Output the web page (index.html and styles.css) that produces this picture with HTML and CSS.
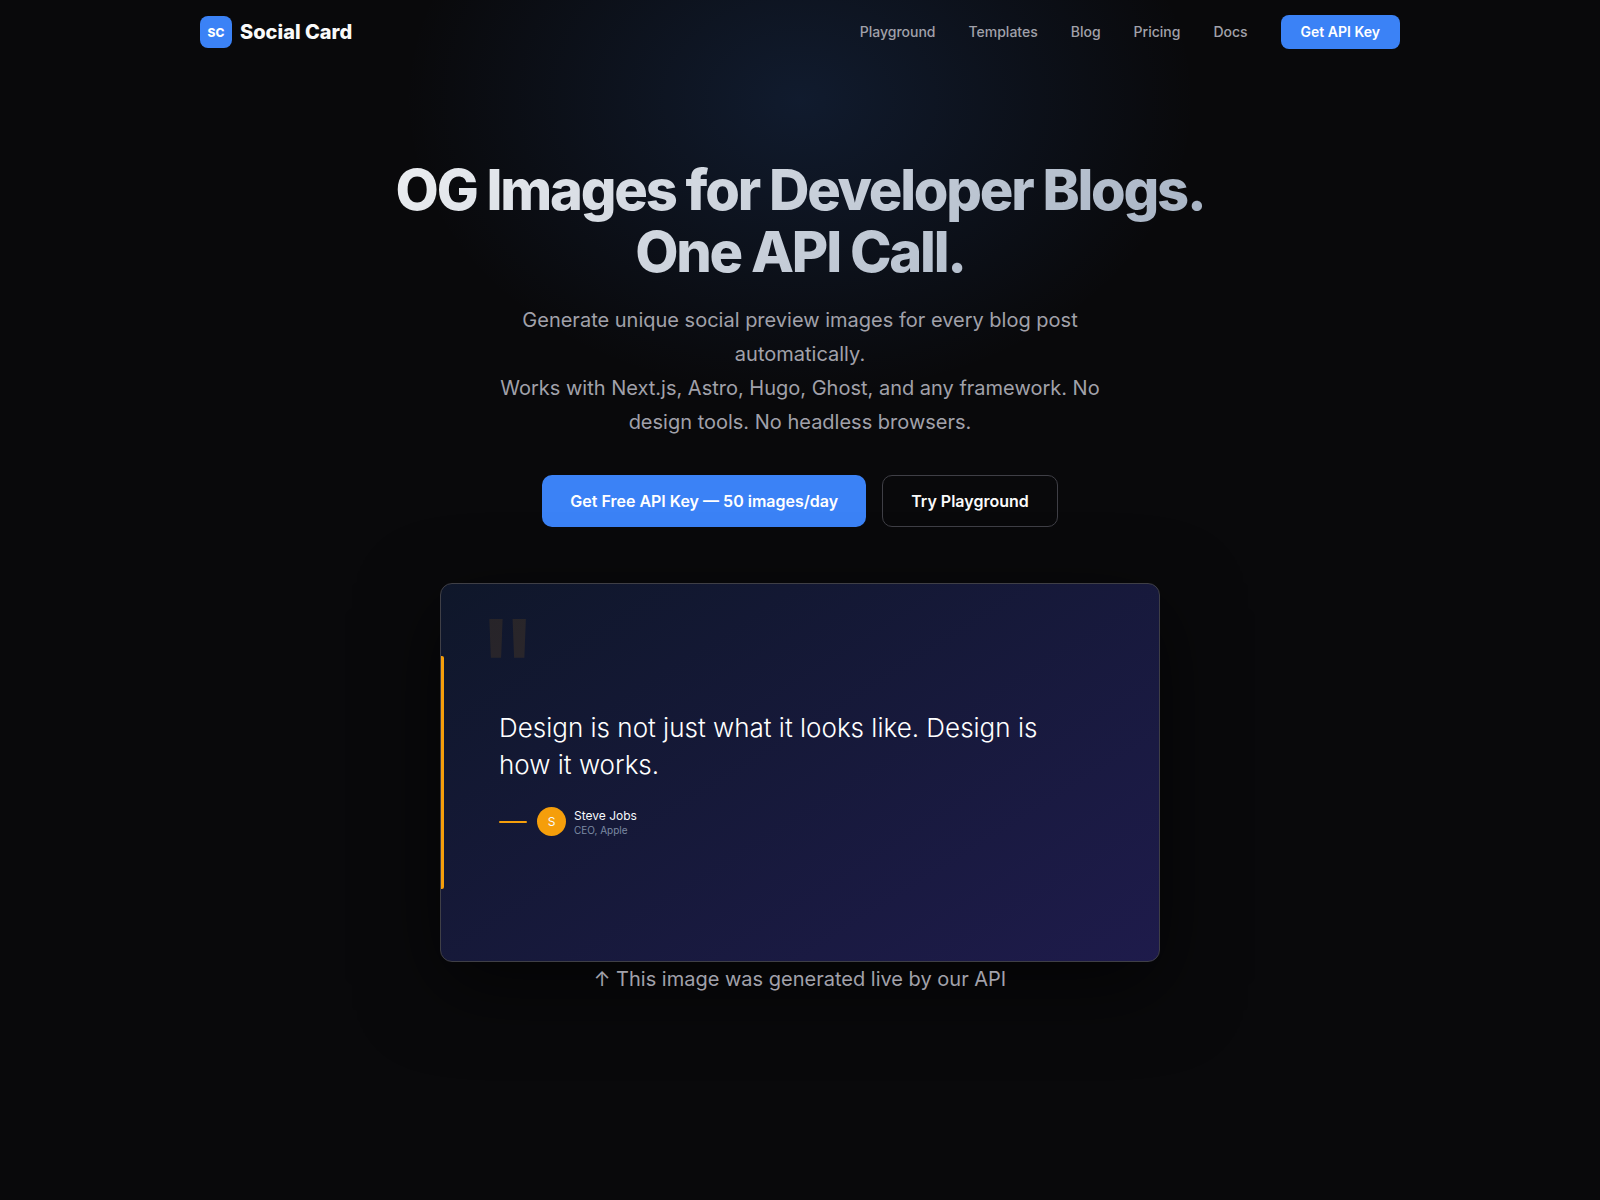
FILE: index.html
```
<!DOCTYPE html>
<html lang="en">
<head>
  <meta charset="UTF-8" />
  <meta name="viewport" content="width=device-width, initial-scale=1.0" />
  <title>Social Card - OG Images for Developer Blogs</title>
  <link rel="stylesheet" href="styles.css">
</head>
<body>
  <header class="header">
    <nav class="nav">
      <a href="/" class="logo">
        <span class="logo-icon">SC</span>
        Social Card
      </a>
      <div class="nav-links">
        <a href="/playground">Playground</a>
        <a href="/templates">Templates</a>
        <a href="/blog">Blog</a>
        <a href="/pricing">Pricing</a>
        <a href="/docs">Docs</a>
        <a href="/signup" class="nav-cta">Get API Key</a>
      </div>
    </nav>
  </header>

  <main class="hero">
    <h1>OG Images for Developer Blogs.<br>One API Call.</h1>
    <p class="hero-text">Generate unique social preview images for every blog post automatically.<br>Works with Next.js, Astro, Hugo, Ghost, and any framework. No design tools. No headless browsers.</p>
    <div class="hero-buttons">
      <a href="/signup" class="btn btn-primary">Get Free API Key — 50 images/day</a>
      <a href="/playground" class="btn btn-secondary">Try Playground</a>
    </div>

    <div class="preview">
      <span class="quote-mark" aria-hidden="true">"</span>
      <blockquote class="quote-text">Design is not just what it looks like. Design is how it works.</blockquote>
      <div class="author">
        <span class="author-line"></span>
        <span class="avatar">S</span>
        <div class="author-info">
          <div class="author-name">Steve Jobs</div>
          <div class="author-role">CEO, Apple</div>
        </div>
      </div>
    </div>
    <p class="hero-text">↑ This image was generated live by our API</p>
  </main>
</body>
</html>
```
FILE: styles.css
```
* {
  box-sizing: border-box;
  margin: 0;
  padding: 0;
}

body {
  position: relative;
  min-height: 100vh;
  overflow-x: hidden;
  background: #09090b;
  color: #fafafa;
  font-family: Inter, "Liberation Sans", sans-serif;
  -webkit-font-smoothing: antialiased;
}

/* blue glow behind the hero */
body::before {
  content: "";
  position: absolute;
  top: -200px;
  left: 50%;
  z-index: -1;
  width: 800px;
  height: 600px;
  transform: translateX(-50%);
  background: radial-gradient(ellipse, rgba(59, 130, 246, 0.15) 0%, transparent 70%);
}

a {
  color: inherit;
  text-decoration: none;
}

.nav {
  display: flex;
  align-items: center;
  justify-content: space-between;
  max-width: 1248px;
  height: 64px;
  margin: 0 auto;
  padding: 0 24px;
}

.logo {
  display: flex;
  align-items: center;
  gap: 8px;
  font-size: 20px;
  font-weight: 800;
}

.logo-icon {
  display: flex;
  align-items: center;
  justify-content: center;
  width: 32px;
  height: 32px;
  border-radius: 8px;
  background: #3b82f6;
  color: #fff;
  font-size: 12px;
}

.nav-links {
  display: flex;
  align-items: center;
  gap: 33px;
  color: #a1a1aa;
  font-size: 14px;
  font-weight: 500;
  line-height: 18px;
}

.nav-links a:hover {
  color: #fafafa;
}

.nav-links .nav-cta {
  padding: 8px 20px;
  border-radius: 8px;
  background: #3b82f6;
  color: #fff;
  font-weight: 600;
}

.hero {
  padding: 95px 24px;
  text-align: center;
}

.hero h1 {
  max-width: 1200px;
  margin: 0 auto 20px;
  background: linear-gradient(135deg, #fafafa 0%, #94a3b8 100%);
  -webkit-background-clip: text;
  background-clip: text;
  color: transparent;
  font-size: 56px;
  font-weight: 800;
  line-height: 62px;
  letter-spacing: -0.04em;
}

.hero-text {
  position: relative;
  max-width: 600px;
  margin: 0 auto;
  color: #a1a1aa;
  font-size: 20px;
  line-height: 34px;
}

.hero-buttons {
  display: flex;
  justify-content: center;
  gap: 16px;
  margin: 36px 0 56px;
}

.btn {
  padding: 16px 28px;
  border-radius: 10px;
  font-size: 16px;
  font-weight: 600;
  line-height: 20px;
}

.btn-primary {
  background: #3b82f6;
  color: #fff;
}

.btn-secondary {
  padding: 15px 28px;
  border: 1px solid #3f3f46;
}

/* sample card */
.preview {
  position: relative;
  display: flex;
  flex-direction: column;
  justify-content: center;
  max-width: 720px;
  aspect-ratio: 720 / 379;
  margin: 0 auto;
  padding: 0 100px 0 58px;
  overflow: hidden;
  border: 1px solid #3f3f46;
  border-radius: 12px;
  background: linear-gradient(148deg, #0f172a 0%, #1e1b4b 100%);
  box-shadow: 0 24px 80px rgba(0, 0, 0, 0.6);
  text-align: left;
}

.preview::before {
  content: "";
  position: absolute;
  top: 72px;
  bottom: 72px;
  left: 0;
  width: 3px;
  border-radius: 0 2px 2px 0;
  background: #f59e0b;
}

.quote-mark {
  position: absolute;
  top: 46px;
  left: 34px;
  color: #f59e0b;
  font-size: 140px;
  font-weight: 400;
  line-height: 80px;
  opacity: 0.1;
}

.quote-text {
  color: #fff;
  font-size: 26px;
  font-weight: 350;
  line-height: 37px;
}

.author {
  display: flex;
  align-items: center;
  margin-top: 24px;
}

.author-line {
  width: 28px;
  height: 2px;
  margin-right: 10px;
  border-radius: 1px;
  background: #f59e0b;
}

.avatar {
  display: flex;
  align-items: center;
  justify-content: center;
  width: 29px;
  height: 29px;
  margin-right: 8px;
  border-radius: 50%;
  background: #f59e0b;
  color: #f8fafc;
  font-size: 12px;
}

.author-name {
  color: #f8fafc;
  font-size: 12px;
  line-height: 16px;
}

.author-role {
  color: #7c8aa3;
  font-size: 10px;
  line-height: 12px;
}
```
